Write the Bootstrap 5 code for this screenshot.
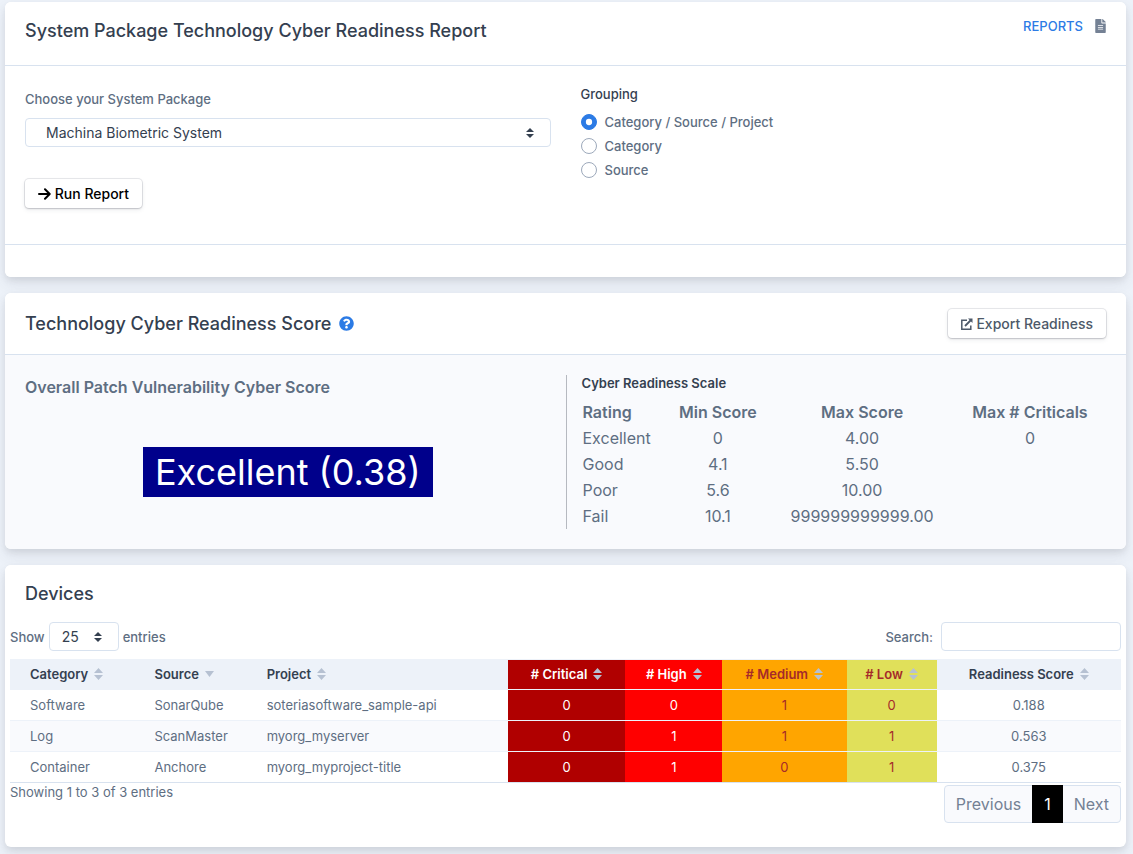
<!DOCTYPE html>
<html lang="en">
<head>
<meta charset="utf-8">
<meta name="viewport" content="width=device-width, initial-scale=1">
<title>System Package Technology Cyber Readiness Report</title>
<link href="https://cdn.jsdelivr.net/npm/bootstrap@5.3.0/dist/css/bootstrap.min.css" rel="stylesheet">
<style>
  :root { --ink: #344050; --text: #5e6e82; --line: #d8e2ef; --tint: #f9fafd; --blue: #2c7be5; }
  body { background: #edf2f9; color: var(--text); font-family: Inter, "Liberation Sans", sans-serif; font-size: 16px; line-height: 24px; }
  .page { padding: 2px 7px 8px 5px; }
  .card { --bs-card-border-width: 0; --bs-card-border-radius: 6px; --bs-card-inner-border-radius: 6px; --bs-card-cap-bg: #fff; --bs-card-spacer-x: 20px; --bs-card-spacer-y: 20px; --bs-card-cap-padding-x: 20px; --bs-card-color: var(--text); box-shadow: 0 7px 14px 0 rgba(65,69,88,.1), 0 3px 6px 0 rgba(0,0,0,.07); }
  .card-header { border-bottom: 1px solid var(--line); }
  .report-header { padding-bottom: 22px; }
  .report-form { padding-bottom: 36px; }
  .card-footer { border-top: 1px solid var(--line); height: 33px; }
  .card .row { --bs-gutter-x: 30px; }
  h5 { font-size: 18px; line-height: 25px; font-weight: 500; color: var(--ink); margin: 0; }
  h6 { font-size: 13px; line-height: 16px; font-weight: 500; color: var(--ink); margin: 0 0 8px; }
  .small-text, .form-check-label { font-size: 13px; line-height: 20px; font-weight: 500; }
  .field-label { line-height: 26px; margin-bottom: 6px; }
  .form-select, .form-control { border-color: var(--line); border-radius: 4px; color: var(--ink); font-size: 14px; line-height: 19px; padding-top: 4px; padding-bottom: 4px; }
  .form-select { padding-left: 20px; background-image: url("data:image/svg+xml,%3Csvg xmlns='http://www.w3.org/2000/svg' viewBox='0 0 4 5'%3E%3Cpath fill='%23344050' d='M2 0L0 2h4zm0 5L0 3h4z'/%3E%3C/svg%3E"); background-size: 8px 10px; background-position: right 16px center; }
  .select-short { width: 70px; padding-left: 12px; padding-right: 16px; }
  .search-box { width: 180px; }
  .form-check { min-height: 24px; padding-left: 24px; margin: 0; display: flex; align-items: center; }
  .form-check .form-check-input { width: 16px; height: 16px; margin: 0 8px 0 -24px; flex: none; border-color: #9da9bb; }
  .form-check .form-check-input:checked { background-color: var(--blue); border-color: var(--blue); background-image: url("data:image/svg+xml,%3Csvg xmlns='http://www.w3.org/2000/svg' viewBox='-4 -4 8 8'%3E%3Ccircle r='1.8' fill='%23fff'/%3E%3C/svg%3E"); }
  .btn-raised { --bs-btn-padding-x: 13px; --bs-btn-padding-y: 4px; --bs-btn-font-size: 14px; --bs-btn-line-height: 21px; --bs-btn-font-weight: 500; --bs-btn-border-width: 0; --bs-btn-border-radius: 4px; --bs-btn-bg: #fff; --bs-btn-color: #4d5969; box-shadow: 0 0 0 1px rgba(43,45,80,.1), 0 2px 5px 0 rgba(43,45,80,.08), 0 1px 2px 0 rgba(0,0,0,.14); }
  .run-btn { --bs-btn-color: #000; margin-top: 32px; }
  .btn-raised svg { vertical-align: -1px; }
  .reports-link { color: var(--blue); text-decoration: none; font-size: 13px; line-height: 16px; font-weight: 500; }
  .score-body { background: var(--tint); border-radius: 0 0 6px 6px; }
  .score-badge { background: #00008b; color: #fff; font-size: 36px; line-height: 50px; padding: 0 12px; }
  .scale-divider { border-left: 1px solid #b6b9c0; }
  .scale-title { font-weight: 600; }
  .scale-table { width: 100%; line-height: 26px; table-layout: fixed; }
  .scale-table th { font-weight: 600; }
  .scale-table th, .scale-table td { text-align: center; padding: 0 1px; white-space: nowrap; }
  .scale-table th:first-child, .scale-table td:first-child { text-align: left; }
  .s-rating { width: 16%; } .s-min { width: 20%; } .s-max { width: 35%; } .s-crit { width: 29%; }
  .devices-body { padding: 0 5px 24px; }
  .devices-table { --bs-table-color: var(--text); --bs-table-bg: transparent; font-size: 13px; line-height: 20px; margin: 0; table-layout: fixed; border-bottom: 1px solid var(--line); }
  .devices-table th, .devices-table td { padding: 5px 0; border-bottom: 0; border-top: 1px solid #edf2f9; text-align: center; white-space: nowrap; }
  .devices-table th { background: #edf2f9; color: var(--ink); font-weight: 600; padding-top: 4px; }
  .devices-table tr > :nth-child(-n+3) { text-align: left; padding-left: 20px; }
  .devices-table tbody tr:nth-child(even) td { background: var(--tint); }
  .devices-table tr > .lvl-critical { background: #b00000 !important; color: #fff; }
  .devices-table tr > .lvl-high { background: #ff0000 !important; color: #fff; }
  .devices-table tr > .lvl-medium { background: #ffa500 !important; color: #a52a2a; }
  .devices-table tr > .lvl-low { background: #e0e05a !important; color: #a52a2a; }
  .c-cat { width: 11.2%; } .c-src { width: 10.1%; } .c-prj { width: 23.5%; } .c-crit { width: 10.6%; }
  .c-high { width: 8.7%; } .c-med { width: 11.2%; } .c-low { width: 8.1%; } .c-score { width: 16.6%; }
  .sorter { width: 9px; height: 12px; fill: #b6c1d2; margin-left: 6px; vertical-align: -1px; }
  .table-info-text { font-size: 13px; line-height: 18px; }
  .pagination { --bs-pagination-color: #748194; --bs-pagination-bg: var(--tint); --bs-pagination-border-color: var(--line); --bs-pagination-active-bg: #000; --bs-pagination-active-border-color: #000; --bs-pagination-padding-y: 6px; --bs-pagination-padding-x: 11px; --bs-pagination-border-radius: 4px; margin: 2px 0 0; }
</style>
</head>
<body>
<svg class="d-none" xmlns="http://www.w3.org/2000/svg">
  <symbol id="sort-both" viewBox="0 0 9 12"><path d="M4.500 0 9 5H0zM4.500 12 0 7h9z"/></symbol>
  <symbol id="sort-down" viewBox="0 0 9 12"><path d="M0 3h9L4.500 9z"/></symbol>
</svg>
<main class="page d-flex flex-column gap-3">

  <section class="card">
    <div class="card-header report-header d-flex justify-content-between align-items-start pt-3">
      <h5>System Package Technology Cyber Readiness Report</h5>
      <div class="d-flex align-items-center gap-2">
        <a class="reports-link me-1" href="#">REPORTS</a>
        <svg width="11" height="14" viewBox="0 0 384 512" fill="#748194" aria-hidden="true"><path d="M224 136V0H24C10.700 0 0 10.700 0 24v464c0 13.300 10.700 24 24 24h336c13.300 0 24-10.700 24-24V160H248c-13.200 0-24-10.800-24-24zm64 236c0 6.600-5.400 12-12 12H108c-6.600 0-12-5.400-12-12v-8c0-6.600 5.400-12 12-12h168c6.600 0 12 5.400 12 12v8zm0-64c0 6.600-5.400 12-12 12H108c-6.600 0-12-5.400-12-12v-8c0-6.600 5.400-12 12-12h168c6.600 0 12 5.400 12 12v8zm0-72v8c0 6.600-5.400 12-12 12H108c-6.600 0-12-5.400-12-12v-8c0-6.600 5.400-12 12-12h168c6.600 0 12 5.400 12 12zm96-114.100v6.100H256V0h6.100c6.400 0 12.500 2.500 17 7l97.900 98c4.500 4.500 7 10.600 7 16.900z"/></svg>
      </div>
    </div>
    <form class="card-body report-form">
      <div class="row">
        <div class="col-6">
          <label class="small-text field-label d-block" for="package">Choose your System Package</label>
          <select class="form-select" id="package"><option>Machina Biometric System</option></select>
          <button type="button" class="btn btn-raised run-btn">
            <svg width="13" height="12" viewBox="0 0 13 12" fill="none" stroke="currentColor" stroke-width="2" stroke-linecap="round" stroke-linejoin="round" aria-hidden="true"><path d="M1 6h10.500M7 1.300 11.700 6 7 10.700"/></svg>
            Run Report</button>
        </div>
        <fieldset class="col-6">
          <h6>Grouping</h6>
          <div class="form-check"><input class="form-check-input" type="radio" name="grouping" id="g1" checked><label class="form-check-label" for="g1">Category / Source / Project</label></div>
          <div class="form-check"><input class="form-check-input" type="radio" name="grouping" id="g2"><label class="form-check-label" for="g2">Category</label></div>
          <div class="form-check"><input class="form-check-input" type="radio" name="grouping" id="g3"><label class="form-check-label" for="g3">Source</label></div>
        </fieldset>
      </div>
    </form>
    <div class="card-footer"></div>
  </section>

  <section class="card">
    <div class="card-header d-flex justify-content-between align-items-center py-3">
      <div class="d-flex align-items-center gap-2">
        <h5>Technology Cyber Readiness Score</h5>
        <svg width="15" height="15" viewBox="0 0 512 512" fill="#2c7be5" aria-hidden="true"><path d="M504 256c0 137-111 248-248 248S8 393 8 256 119 8 256 8s248 111 248 248zM262.700 90c-54.500 0-89.300 23-116.500 63.800-3.500 5.300-2.400 12.400 2.700 16.300l34.700 26.300c5.200 3.900 12.600 3 16.700-2.100 17.900-22.700 30.100-35.800 57.300-35.800 20.400 0 45.700 13.100 45.700 33 0 15-12.400 22.700-32.500 34C247.100 238.500 216 254.900 216 296v4c0 6.600 5.400 12 12 12h56c6.600 0 12-5.400 12-12v-1.300c0-28.500 83.200-29.600 83.200-106.700 0-58-60.200-102-116.500-102zM256 338c-25.400 0-46 20.600-46 46s20.600 46 46 46 46-20.600 46-46-20.600-46-46-46z"/></svg>
      </div>
      <button type="button" class="btn btn-raised">
        <svg width="12" height="12" viewBox="0 0 12 12" fill="none" stroke="currentColor" stroke-width="1.500" aria-hidden="true"><path d="M6 2.200H.8v9h9V7.500"/><path d="M4 8l6-6" stroke-width="1.800"/><path d="M7 .5h4.500V5z" fill="currentColor" stroke="none"/></svg>
        Export Readiness</button>
    </div>
    <div class="card-body score-body">
      <div class="row">
        <div class="col-6">
          <div class="fw-medium fw-semibold">Overall Patch Vulnerability Cyber Score</div>
          <div class="d-flex justify-content-center mt-5"><span class="score-badge">Excellent (0.38)</span></div>
        </div>
        <div class="col-6 scale-divider">
          <h6 class="scale-title">Cyber Readiness Scale</h6>
          <table class="scale-table">
            <colgroup><col class="s-rating"><col class="s-min"><col class="s-max"><col class="s-crit"></colgroup>
            <thead><tr><th>Rating</th><th>Min Score</th><th>Max Score</th><th>Max # Criticals</th></tr></thead>
            <tbody>
              <tr><td>Excellent</td><td>0</td><td>4.00</td><td>0</td></tr>
              <tr><td>Good</td><td>4.1</td><td>5.50</td><td></td></tr>
              <tr><td>Poor</td><td>5.6</td><td>10.00</td><td></td></tr>
              <tr><td>Fail</td><td>10.1</td><td>999999999999.00</td><td></td></tr>
            </tbody>
          </table>
        </div>
      </div>
    </div>
  </section>

  <section class="card">
    <div class="card-header border-0 py-3"><h5>Devices</h5></div>
    <div class="devices-body">
      <div class="d-flex justify-content-between align-items-center mb-2">
        <label class="small-text d-flex align-items-center gap-1">Show <select class="form-select select-short"><option>25</option></select> entries</label>
        <label class="small-text d-flex align-items-center gap-2">Search: <input type="search" class="form-control search-box"></label>
      </div>
      <table class="table devices-table">
        <colgroup><col class="c-cat"><col class="c-src"><col class="c-prj"><col class="c-crit"><col class="c-high"><col class="c-med"><col class="c-low"><col class="c-score"></colgroup>
        <thead><tr>
          <th>Category<svg class="sorter"><use href="#sort-both"/></svg></th>
          <th>Source<svg class="sorter"><use href="#sort-down"/></svg></th>
          <th>Project<svg class="sorter"><use href="#sort-both"/></svg></th>
          <th class="lvl-critical"># Critical<svg class="sorter"><use href="#sort-both"/></svg></th>
          <th class="lvl-high"># High<svg class="sorter"><use href="#sort-both"/></svg></th>
          <th class="lvl-medium"># Medium<svg class="sorter"><use href="#sort-both"/></svg></th>
          <th class="lvl-low"># Low<svg class="sorter"><use href="#sort-both"/></svg></th>
          <th>Readiness Score<svg class="sorter"><use href="#sort-both"/></svg></th>
        </tr></thead>
        <tbody>
          <tr><td>Software</td><td>SonarQube</td><td>soteriasoftware_sample-api</td><td class="lvl-critical">0</td><td class="lvl-high">0</td><td class="lvl-medium">1</td><td class="lvl-low">0</td><td>0.188</td></tr>
          <tr><td>Log</td><td>ScanMaster</td><td>myorg_myserver</td><td class="lvl-critical">0</td><td class="lvl-high">1</td><td class="lvl-medium">1</td><td class="lvl-low">1</td><td>0.563</td></tr>
          <tr><td>Container</td><td>Anchore</td><td>myorg_myproject-title</td><td class="lvl-critical">0</td><td class="lvl-high">1</td><td class="lvl-medium">0</td><td class="lvl-low">1</td><td>0.375</td></tr>
        </tbody>
      </table>
      <div class="d-flex justify-content-between align-items-start">
        <div class="table-info-text">Showing 1 to 3 of 3 entries</div>
        <ul class="pagination">
          <li class="page-item"><a class="page-link" href="#">Previous</a></li>
          <li class="page-item active"><a class="page-link" href="#">1</a></li>
          <li class="page-item"><a class="page-link" href="#">Next</a></li>
        </ul>
      </div>
    </div>
  </section>
</main>
<script src="https://cdn.jsdelivr.net/npm/bootstrap@5.3.0/dist/js/bootstrap.bundle.min.js"></script>
</body>
</html>
